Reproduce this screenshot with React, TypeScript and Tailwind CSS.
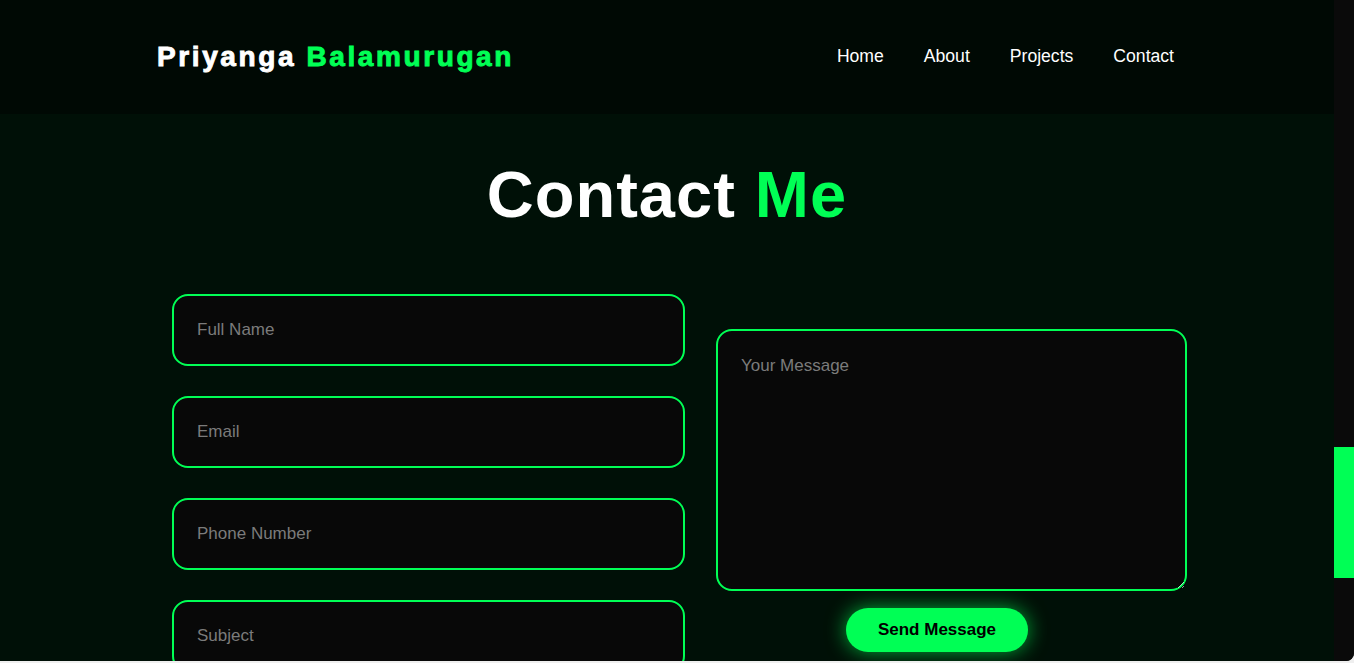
export default function App() {
  const fields = ["Full Name", "Email", "Phone Number", "Subject"];

  return (
    <div className="h-[663px] bg-[#efefef] overflow-hidden font-['Liberation_Sans',Arial,sans-serif]">
      <div className="h-[661px] flex overflow-hidden rounded-br-[8px] bg-[#0a0a0a]">
        {/* Page */}
        <div className="flex-1 flex flex-col bg-[#001007]">
          {/* Header */}
          <header className="h-[114px] shrink-0 bg-[#000904] flex items-center justify-between pl-[157px] pr-[160px]">
            <div className="text-[28px] font-bold tracking-[2.6px] text-white leading-none [-webkit-text-stroke:0.9px_currentColor]">
              Priyanga <span className="text-[#00ff55]">Balamurugan</span>
            </div>
            <nav className="flex items-center gap-[40px] text-[17.6px] text-white -mt-[2px]">
              <a href="#">Home</a>
              <a href="#">About</a>
              <a href="#">Projects</a>
              <a href="#">Contact</a>
            </nav>
          </header>

          {/* Contact */}
          <main className="flex-1">
            <h1 className="text-center text-[65px] font-bold text-white leading-none tracking-[1px] mt-[48px]">
              Contact <span className="text-[#00ff55]">Me</span>
            </h1>

            <div className="flex gap-[31px] pl-[172px] mt-[67px]">
              <div className="w-[513px] flex flex-col gap-[30px]">
                {fields.map((f) => (
                  <input
                    key={f}
                    placeholder={f}
                    className="h-[72px] shrink-0 rounded-[16px] border-2 border-[#00ff55] bg-[#080808] pl-[23px] text-[17px] text-white placeholder:text-[#7b7b7b] outline-none"
                  />
                ))}
              </div>

              <div className="w-[471px] flex flex-col items-start pt-[35px]">
                <textarea
                  placeholder="Your Message"
                  className="w-full h-[262px] rounded-[16px] border-2 border-[#00ff55] bg-[#080808] px-[23px] pt-[22px] text-[17px] text-white placeholder:text-[#7b7b7b] outline-none"
                />
                <button className="mt-[17px] ml-[130px] h-[44px] w-[182px] rounded-full bg-[#00ff55] text-[17px] font-bold text-black shadow-[0_0_20px_rgba(0,255,85,0.65)]">
                  Send Message
                </button>
              </div>
            </div>
          </main>
        </div>

        {/* Scrollbar */}
        <div className="w-[20px] shrink-0 bg-[#0a0a0a]">
          <div className="mt-[447px] h-[131px] bg-[#00ff55]" />
        </div>
      </div>
    </div>
  );
}
